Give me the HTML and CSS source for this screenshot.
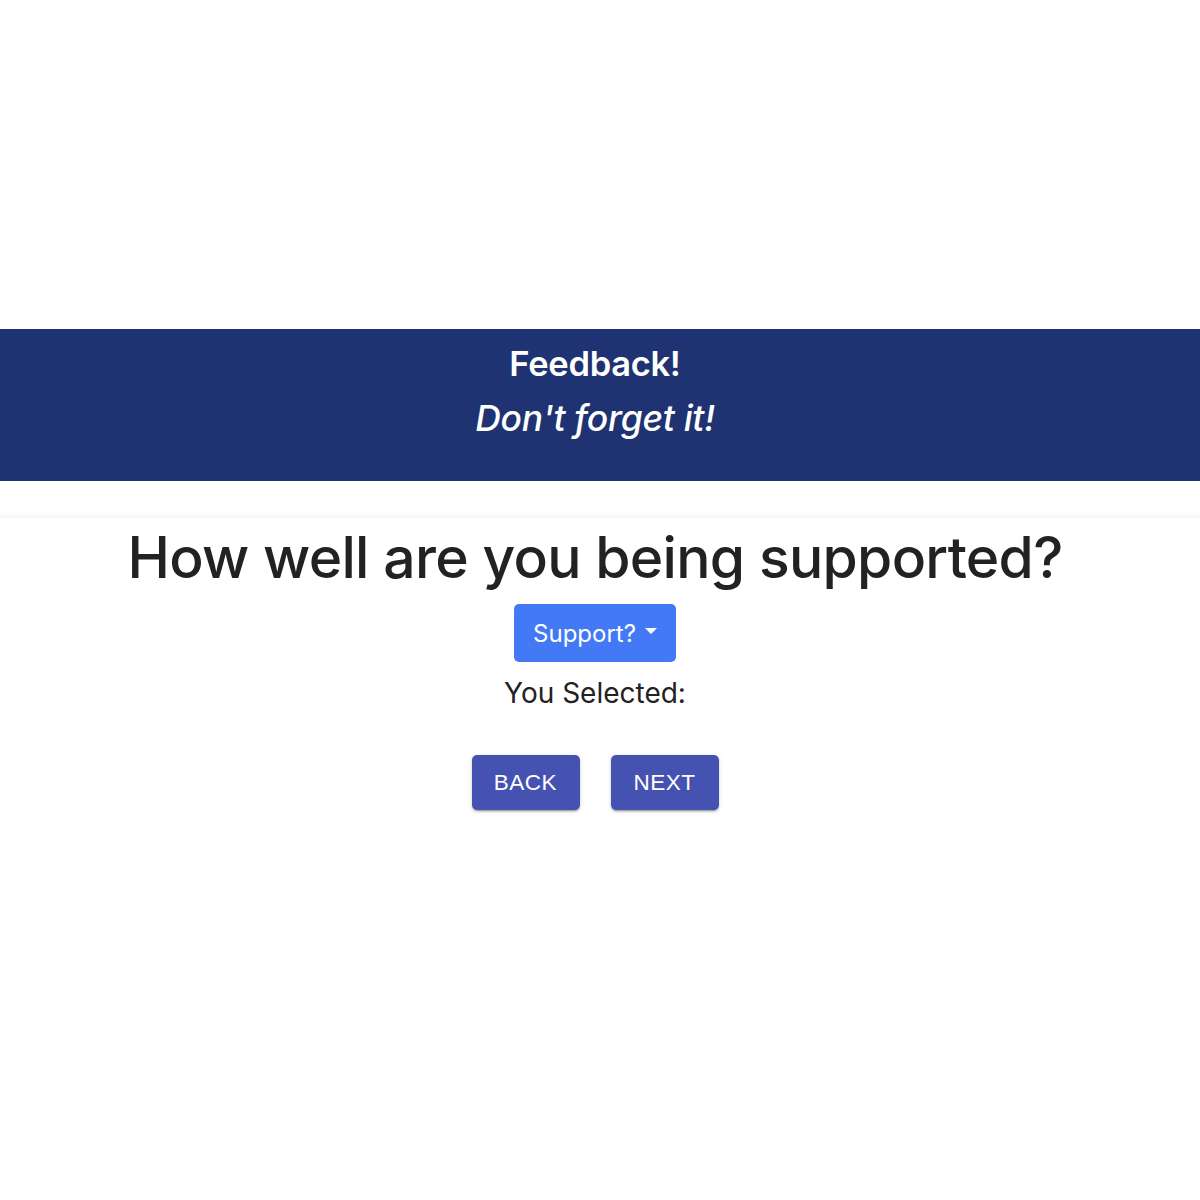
FILE: index.html
```html
<!DOCTYPE html>
<html>
<head>
<meta charset="utf-8">
<link rel="stylesheet" href="styles.css">
</head>
<body>
<div class="page">
  <header class="banner">
    <div class="banner-title">Feedback!</div>
    <div class="banner-sub">Don't forget it!</div>
  </header>
  <section class="card">
    <h1 class="question">How well are you being supported?</h1>
    <button class="dropdown">Support? <span class="caret"></span></button>
    <p class="selected">You Selected:</p>
    <div class="nav">
      <button class="nav-btn">BACK</button>
      <button class="nav-btn">NEXT</button>
    </div>
  </section>
</div>
</body>
</html>
```

FILE: styles.css
```css
* { box-sizing: border-box; }
html, body { margin: 0; padding: 0; background: #fff; }
body { font-family: Inter, "Noto Sans", sans-serif; color: #212121; }
.page { padding-top: 329px; }
.banner {
  background: #1f3373;
  color: #fff;
  height: 152px;
  display: flex;
  flex-direction: column;
  align-items: center;
  padding: 14px 10px 0 0;
}
.banner-title { font-size: 34.5px; font-weight: 600; line-height: 42px; letter-spacing: -0.3px; }
.banner-sub { font-size: 35.5px; font-weight: 500; font-style: italic; line-height: 42px; margin-top: 13px; letter-spacing: -0.3px; }
.card {
  margin-top: 37px;
  height: 308px;
  background: #fff;
  box-shadow: 0 -2px 6px rgba(0,0,0,0.05), 0 3px 2px -1px rgba(0,0,0,0.3), 0 4px 5px rgba(0,0,0,0.08);
  display: flex;
  flex-direction: column;
  align-items: center;
  padding-right: 10px;
}
.question { margin: 2px 0 0; font-size: 57px; font-weight: 500; line-height: 76px; letter-spacing: -0.7px; color: #222; }
.dropdown {
  margin-top: 8px;
  width: 162px;
  height: 58px;
  background: #4479f5;
  color: #fff;
  border: none;
  border-radius: 5px;
  font-family: Inter, "Noto Sans", sans-serif;
  font-size: 24px;
  display: flex;
  align-items: center;
  justify-content: center;
  gap: 9px;
  padding: 0;
}
.caret { width: 0; height: 0; border-left: 6.5px solid transparent; border-right: 6.5px solid transparent; border-top: 6.5px solid #fff; margin-top: -4px; }
.selected { margin: 13px 0 0; font-size: 28px; line-height: 36px; color: #222; }
.nav { display: flex; gap: 31px; margin-top: 44px; }
.nav-btn {
  width: 108px;
  height: 55px;
  background: #4652b1;
  color: #fff;
  border: none;
  border-radius: 5px;
  font-family: "Liberation Sans", Arial, sans-serif;
  font-size: 22.5px;
  letter-spacing: 0.5px;
  box-shadow: 0 3px 1px -2px rgba(0,0,0,0.2), 0 2px 2px 0 rgba(0,0,0,0.14), 0 1px 5px 0 rgba(0,0,0,0.12);
  padding: 0;
}
```
